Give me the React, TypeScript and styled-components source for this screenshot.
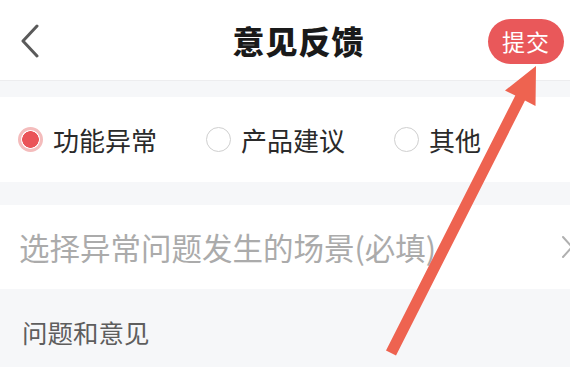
import styled, { createGlobalStyle } from "styled-components";

const GlobalStyle = createGlobalStyle`
  * { box-sizing: border-box; }
  body {
    margin: 0;
    background: #ffffff;
    font-family: "Noto Sans CJK SC", "Noto Sans", sans-serif;
  }
`;

const options = [
  { label: "功能异常", checked: true },
  { label: "产品建议", checked: false },
  { label: "其他", checked: false },
];

export default function App() {
  return (
    <>
      <GlobalStyle />
      <Page>
        <Header>
          <BackButton aria-label="返回">
            <svg width="22" height="34" viewBox="0 0 22 34">
              <path
                d="M18 2 L4 17 L18 32"
                fill="none"
                stroke="#5a5a5a"
                strokeWidth="3"
                strokeLinecap="round"
                strokeLinejoin="round"
              />
            </svg>
          </BackButton>
          <Title>意见反馈</Title>
          <SubmitWrap>
            <Submit>提交</Submit>
          </SubmitWrap>
        </Header>
        <Band $height={16} />
        <RadioRow>
          {options.map((opt) => (
            <RadioItem key={opt.label}>
              <Radio $checked={opt.checked} />
              <RadioLabel>{opt.label}</RadioLabel>
            </RadioItem>
          ))}
        </RadioRow>
        <Band $height={23} />
        <SelectRow>
          <Placeholder>选择异常问题发生的场景(必填)</Placeholder>
          <svg width="14" height="24" viewBox="0 0 14 24">
            <path
              d="M3 2 L12 12 L3 22"
              fill="none"
              stroke="#b0b0b0"
              strokeWidth="2"
              strokeLinecap="round"
              strokeLinejoin="round"
            />
          </svg>
        </SelectRow>
        <Section>
          <SectionTitle>问题和意见</SectionTitle>
        </Section>

        <Arrow width="570" height="376" viewBox="0 0 570 376">
          <polygon
            points="536,66 535.5,106 525,100.5 396,355.5 386,350.5 515.3,95.5 505,90.5"
            fill="#ee6350"
          />
        </Arrow>
      </Page>
    </>
  );
}

const Page = styled.div`
  position: relative;
  width: 570px;
  height: 376px;
  overflow: hidden;
  background: #ffffff;
`;

const Header = styled.div`
  display: grid;
  grid-template-columns: 1fr auto 1fr;
  align-items: center;
  height: 81px;
  padding: 0 6px 0 19px;
  border-bottom: 1px solid #ededef;
`;

const BackButton = styled.div`
  display: flex;
  align-items: center;
  margin-top: 2px;
`;

const Title = styled.h1`
  margin: 0 0 0 14px;
  font-size: 32px;
  font-weight: 900;
  color: #1a1a1a;
  letter-spacing: 1px;
  line-height: 1;
`;

const SubmitWrap = styled.div`
  display: flex;
  justify-content: flex-end;
`;

const Submit = styled.button`
  height: 45px;
  width: 76px;
  margin-top: 2px;
  border: none;
  border-radius: 23px;
  background: #e9585a;
  color: #ffffff;
  font-family: inherit;
  font-size: 23px;
  letter-spacing: 1px;
  padding: 0;
`;

const Band = styled.div<{ $height: number }>`
  height: ${(p) => p.$height}px;
  background: #f6f7f9;
`;

const RadioRow = styled.div`
  display: flex;
  align-items: center;
  gap: 49px;
  height: 85px;
  padding-left: 18px;
`;

const RadioItem = styled.label`
  display: flex;
  align-items: center;
  gap: 10px;
`;

const Radio = styled.span<{ $checked: boolean }>`
  width: 25px;
  height: 25px;
  border-radius: 50%;
  border: ${(p) => (p.$checked ? "3px solid #f4bcbc" : "1.5px solid #cfcfcf")};
  background: ${(p) =>
    p.$checked ? "radial-gradient(circle, #ea5458 0 8px, #ffffff 8.6px)" : "#ffffff"};
`;

const RadioLabel = styled.span`
  font-size: 26px;
  color: #2a2a2a;
  line-height: 1;
`;

const SelectRow = styled.div`
  display: flex;
  align-items: center;
  justify-content: space-between;
  height: 84px;
  padding: 0 0 0 19px;
  margin-right: -4px;
`;

const Placeholder = styled.span`
  font-size: 30.5px;
  color: #ababab;
  line-height: 1;
`;

const Section = styled.div`
  height: 78px;
  background: #f6f7f9;
  padding: 30px 0 0 22px;
`;

const SectionTitle = styled.span`
  font-size: 25.5px;
  color: #5e5e5e;
  line-height: 1;
`;

const Arrow = styled.svg`
  position: absolute;
  left: 0;
  top: 0;
  pointer-events: none;
`;
